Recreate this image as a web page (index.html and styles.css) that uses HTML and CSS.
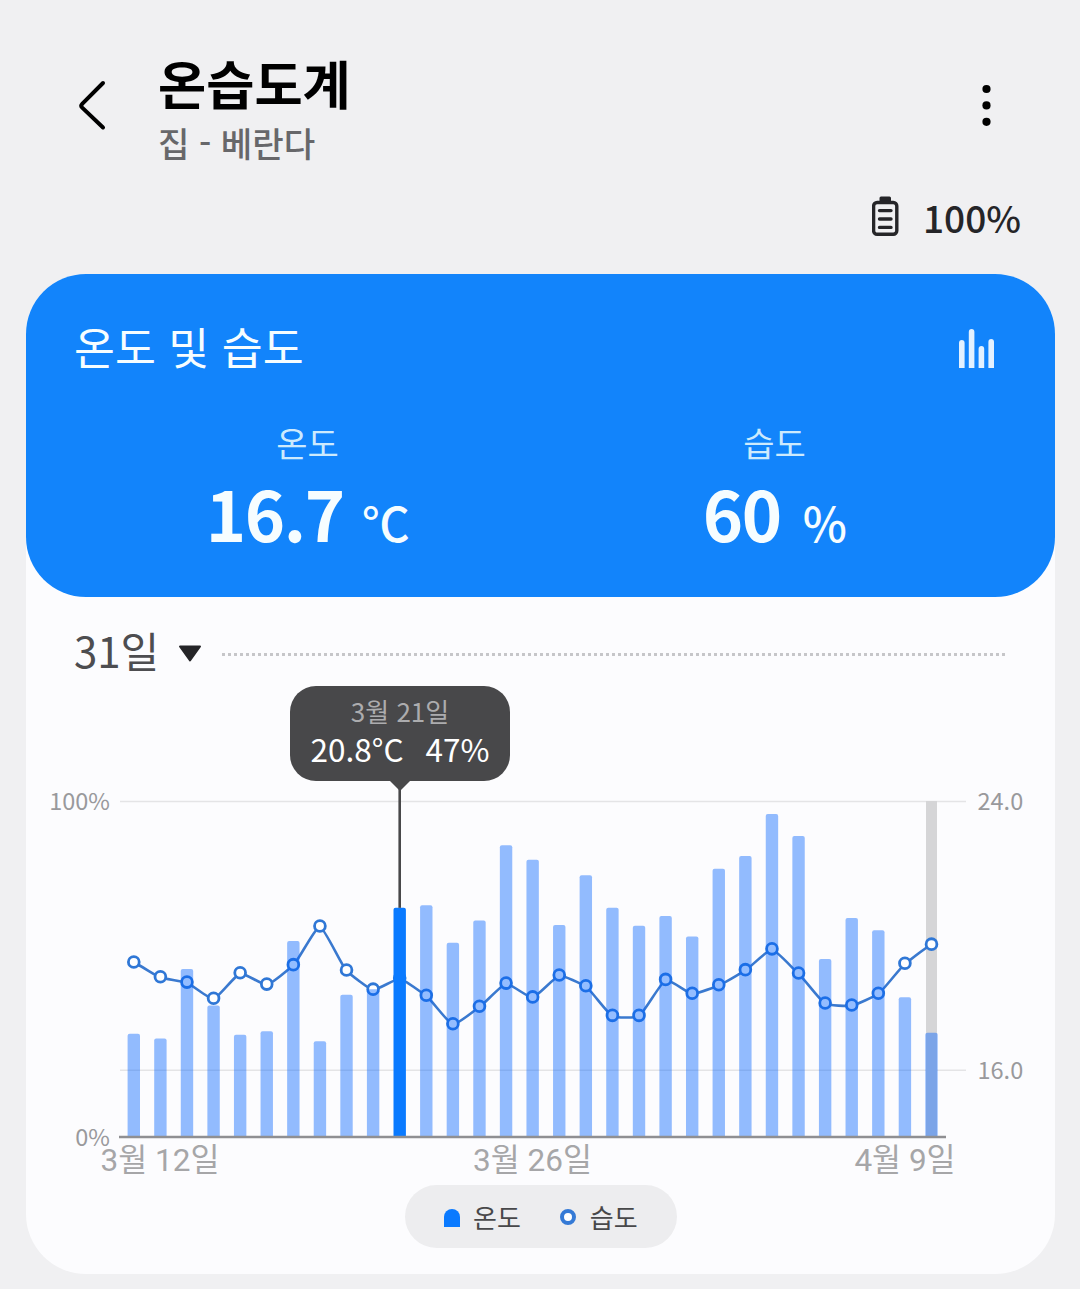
FILE: index.html
```html
<!DOCTYPE html>
<html lang="ko">
<head>
    <meta charset="UTF-8">
    <meta name="viewport" content="width=device-width, initial-scale=1.0">
    <title>온습도계</title>
    <link rel="stylesheet" href="styles.css">
</head>
<body>

    <!-- Header -->
    <header class="header">
        <svg class="back-icon" width="30" height="52" viewBox="0 0 30 52">
            <path d="M26 4 L5.2 24.8 Q3.3 26.7 5.2 28.6 L26 48.5"/>
        </svg>
        <div class="header-text">
            <h1>온습도계</h1>
            <p>집 - 베란다</p>
        </div>
        <svg class="more-icon" width="10" height="44" viewBox="0 0 10 44">
            <circle cx="4.5" cy="6" r="4.1"/>
            <circle cx="4.5" cy="22.4" r="4.1"/>
            <circle cx="4.5" cy="38.8" r="4.1"/>
        </svg>
    </header>

    <!-- Battery -->
    <div class="battery">
        <svg class="battery-icon" width="28" height="42" viewBox="0 0 28 42">
            <rect x="7.5" y="0.5" width="11.5" height="6" rx="1.5" class="battery-cap"/>
            <rect x="1.6" y="6.5" width="23.2" height="31.8" rx="3.5"/>
            <path d="M7.5 14.6 H19 M7.5 23 H19 M7.5 31.4 H19"/>
        </svg>
        <span>100%</span>
    </div>

    <main class="panel">
        <!-- Current values -->
        <section class="current">
            <div class="current-head">
                <h2>온도 및 습도</h2>
                <svg class="bars-icon" width="36" height="40" viewBox="0 0 36 40">
                    <path d="M0 39 V14 a2.8 3 0 0 1 5.6 0 V39 Z"/>
                    <path d="M9.8 39 V3 a2.8 3 0 0 1 5.6 0 V39 Z"/>
                    <path d="M19.6 39 V20 a2.8 3 0 0 1 5.6 0 V39 Z"/>
                    <path d="M29.4 39 V13 a2.8 3 0 0 1 5.6 0 V39 Z"/>
                </svg>
            </div>
            <div class="values">
                <div class="value">
                    <p class="label">온도</p>
                    <p class="number">16.7<span class="unit unit-c">°C</span></p>
                </div>
                <div class="value">
                    <p class="label">습도</p>
                    <p class="number">60<span class="unit unit-p">%</span></p>
                </div>
            </div>
        </section>

        <!-- Period -->
        <div class="period">
            <span class="period-text">31일</span>
            <svg class="period-arrow" width="24" height="18" viewBox="0 0 24 18">
                <path d="M2 1.5 H22 L12 15.5 Z"/>
            </svg>
            <div class="dots"></div>
        </div>

        <!-- Chart -->
        <div class="chart">
            <svg id="chart" width="1029" height="410" viewBox="0 0 1029 410"></svg>
            <div class="tooltip">
                <p class="tooltip-date">3월 21일</p>
                <p class="tooltip-values"><span>20.8°C</span><span>47%</span></p>
            </div>
        </div>

        <!-- Legend -->
        <div class="legend">
            <span class="legend-bar"></span>
            <span class="legend-temp">온도</span>
            <span class="legend-dot"></span>
            <span>습도</span>
        </div>
    </main>

    <script src="chart.js"></script>
</body>
</html>
```
FILE: styles.css
```css
body {
    margin: 0;
    background-color: #f0f0f2;
    font-family: "Noto Sans CJK KR", sans-serif;
    color: #252528;
}

h1, h2, p {
    margin: 0;
}

svg {
    display: block;
}

/* Header */
.header {
    display: flex;
    align-items: flex-start;
    height: 136px;
    padding: 48px 88px 0 77px;
}

.back-icon {
    margin-top: 31px;
    fill: none;
    stroke: #000;
    stroke-width: 4;
    stroke-linecap: round;
}

.header-text {
    flex: 1;
    margin-left: 51px;
}

.header h1 {
    font-size: 52.4px;
    line-height: 69px;
    font-weight: 700;
    color: #000;
}

.header p {
    padding-top: 2px;
    font-size: 34.2px;
    line-height: 46px;
    font-weight: 500;
    color: #67676a;
}

.more-icon {
    margin-top: 35px;
}

/* Battery */
.battery {
    display: flex;
    align-items: center;
    justify-content: flex-end;
    gap: 23px;
    height: 66px;
    padding-right: 59px;
    margin-bottom: 24px;
    font-size: 37px;
    line-height: 60px;
    font-weight: 500;
}

.battery-icon {
    fill: none;
    stroke: #252528;
    stroke-width: 3.4;
    stroke-linecap: round;
}

.battery-icon .battery-cap {
    fill: #252528;
    stroke: none;
}

.panel {
    width: 1029px;
    height: 1000px;
    margin-left: 26px;
    border-radius: 60px;
    background-color: #fcfcfe;
}

/* Current values */
.current {
    height: 323px;
    box-sizing: border-box;
    padding: 39px 47px 0 48px;
    border-radius: 60px;
    background-color: #1284fb;
    color: #f6fdff;
}

.current-head {
    display: flex;
    justify-content: space-between;
    height: 102px;
}

.current h2 {
    font-size: 44.5px;
    line-height: 66px;
    font-weight: 400;
}

.bars-icon {
    margin: 16px 13px 0 0;
    fill: #e3f1ff;
}

.values {
    display: grid;
    grid-template-columns: 1fr 1fr;
}

.value {
    text-align: center;
}

.label {
    font-size: 34px;
    line-height: 56px;
    font-weight: 400;
    color: #cdeafd;
}

.number {
    font-size: 68.5px;
    line-height: 83px;
    font-weight: 700;
    letter-spacing: -1.4px;
}

.unit {
    font-size: 47px;
    font-weight: 500;
    letter-spacing: -0.5px;
}

.unit-c {
    margin-left: 18px;
}

.unit-p {
    margin-left: 22px;
}

/* Period */
.period {
    display: flex;
    align-items: center;
    height: 89px;
    padding: 25px 47px 0 48px;
    box-sizing: border-box;
}

.period-text {
    margin-top: -9px;
    font-size: 42px;
    line-height: 60px;
    color: #4d4d50;
}

.period-arrow {
    margin: 0 20px 0 19px;
    fill: #252528;
    stroke: #252528;
    stroke-width: 2;
    stroke-linejoin: round;
}

.dots {
    flex: 1;
    height: 3px;
    background: repeating-linear-gradient(to right, #c6c6c9 0 3px, transparent 3px 6px);
}

/* Chart */
.chart {
    position: relative;
    padding-top: 94px;
}

.grid {
    stroke: #e4e4e6;
    stroke-width: 1.5;
}

.axis {
    stroke: #8f8f92;
    stroke-width: 2.5;
}

.today {
    fill: #d5d5d7;
}

.bar {
    fill: rgba(0, 97, 255, 0.42);
}

.bar-selected {
    fill: #0a7aff;
}

.line {
    fill: none;
    stroke: #3a79cf;
    stroke-width: 2.6;
}

.point {
    fill: #fff;
    stroke: #2f77d6;
    stroke-width: 2.8;
}

.marker {
    stroke: #48484a;
    stroke-width: 2.6;
}

.y-label {
    font-size: 23.5px;
    fill: #99999c;
}

.x-label {
    font-family: Roboto, "Noto Sans CJK KR", sans-serif;
    font-size: 31.5px;
    fill: #a6a6a8;
}

/* Tooltip */
.tooltip {
    position: absolute;
    top: 0;
    left: 264px;
    width: 220px;
    height: 95px;
    border-radius: 26px;
    background-color: #48484a;
    text-align: center;
}

.tooltip::after {
    content: "";
    position: absolute;
    top: 94px;
    left: 99px;
    border: 11px solid transparent;
    border-top-color: #48484a;
    border-bottom: 0;
}

.tooltip-date {
    padding-top: 6px;
    font-size: 26px;
    line-height: 38px;
    color: #acacae;
}

.tooltip-values {
    display: flex;
    justify-content: center;
    gap: 22px;
    font-size: 31.5px;
    line-height: 37px;
    color: #fff;
}

/* Legend */
.legend {
    display: flex;
    align-items: center;
    width: 272px;
    height: 63px;
    margin: -5px 0 0 379px;
    padding-left: 39px;
    box-sizing: border-box;
    border-radius: 32px;
    background-color: #ededef;
    font-size: 26px;
    color: #48484a;
}

.legend-bar {
    width: 16px;
    height: 18px;
    margin: 2px 13px 0 0;
    border-radius: 8px 8px 0 0;
    background-color: #0a7aff;
}

.legend-temp {
    margin-right: 39px;
}

.legend-dot {
    width: 8px;
    height: 8px;
    margin-right: 14px;
    border: 4px solid #357ad6;
    border-radius: 50%;
    background-color: #fff;
}
```
FILE: chart.js
```javascript
const temps = [17.07, 16.93, 19.0, 17.91, 17.04, 17.15, 19.83, 16.85, 18.23, 18.4, 20.82,
    20.9, 19.78, 20.44, 22.68, 22.25, 20.31, 21.79, 20.82, 20.29, 20.58, 19.97, 21.98,
    22.36, 23.61, 22.96, 19.3, 20.52, 20.15, 18.16, 17.1];
const humidity = [52.1, 47.7, 46.1, 41.3, 48.9, 45.5, 51.3, 62.8, 49.7, 44, 47.3,
    42.2, 33.7, 38.9, 45.8, 41.7, 48.2, 45, 36.2, 36.2, 46.9, 42.8, 45.3,
    49.8, 56, 48.8, 39.9, 39.3, 42.8, 51.7, 57.4];
const selected = 10;

const top100 = 21;
const base = 357;
const barWidth = 12.4;

const x = i => 107.8 + i * 26.59;
const tempY = t => base - (t - 14) * 33.6;
const humY = h => base - h * 3.36;

let out = '';

// Grid
out += `<path class="grid" d="M94 ${top100 + 0.5} H940 M94 290.3 H940"/>`;
out += `<rect class="today" x="${x(30) - 5.5}" y="${top100}" width="11" height="${base - top100}"/>`;

// Humidity line, slightly smoothed
const lineY = i => humY(humidity[Math.max(0, Math.min(humidity.length - 1, i))]) + 0.7;
let d = `M${x(0)} ${lineY(0)}`;
for (let i = 1; i < humidity.length; i++) {
    const c1 = lineY(i - 1) + (lineY(i) - lineY(i - 2)) * 0.06;
    const c2 = lineY(i) - (lineY(i + 1) - lineY(i - 1)) * 0.06;
    d += ` C${x(i - 1) + 4} ${c1} ${x(i) - 4} ${c2} ${x(i)} ${lineY(i)}`;
}
out += `<path class="line" d="${d}"/>`;
humidity.forEach((h, i) => {
    out += `<circle class="point" cx="${x(i)}" cy="${humY(h)}" r="5.4"/>`;
});

// Temperature bars
temps.forEach((t, i) => {
    const left = x(i) - barWidth / 2;
    const y = tempY(t);
    const cls = i === selected ? 'bar-selected' : 'bar';
    out += `<path class="${cls}" d="M${left} ${base} V${y + 2} q0 -2 2 -2 h${barWidth - 4} q2 0 2 2 V${base} Z"/>`;
});
out += `<path class="marker" d="M${x(selected)} 8 V${tempY(temps[selected])}"/>`;
out += `<path class="axis" d="M93 ${base} H920"/>`;

// Labels
out += `<text class="y-label" x="84" y="30" text-anchor="end">100%</text>`;
out += `<text class="y-label" x="84" y="366" text-anchor="end">0%</text>`;
out += `<text class="y-label" x="951.5" y="30">24.0</text>`;
out += `<text class="y-label" x="951.5" y="299">16.0</text>`;
out += `<text class="x-label" x="134" y="391" text-anchor="middle">3월 12일</text>`;
out += `<text class="x-label" x="506.5" y="391" text-anchor="middle">3월 26일</text>`;
out += `<text class="x-label" x="879" y="391" text-anchor="middle">4월 9일</text>`;

document.getElementById('chart').innerHTML = out;
```
